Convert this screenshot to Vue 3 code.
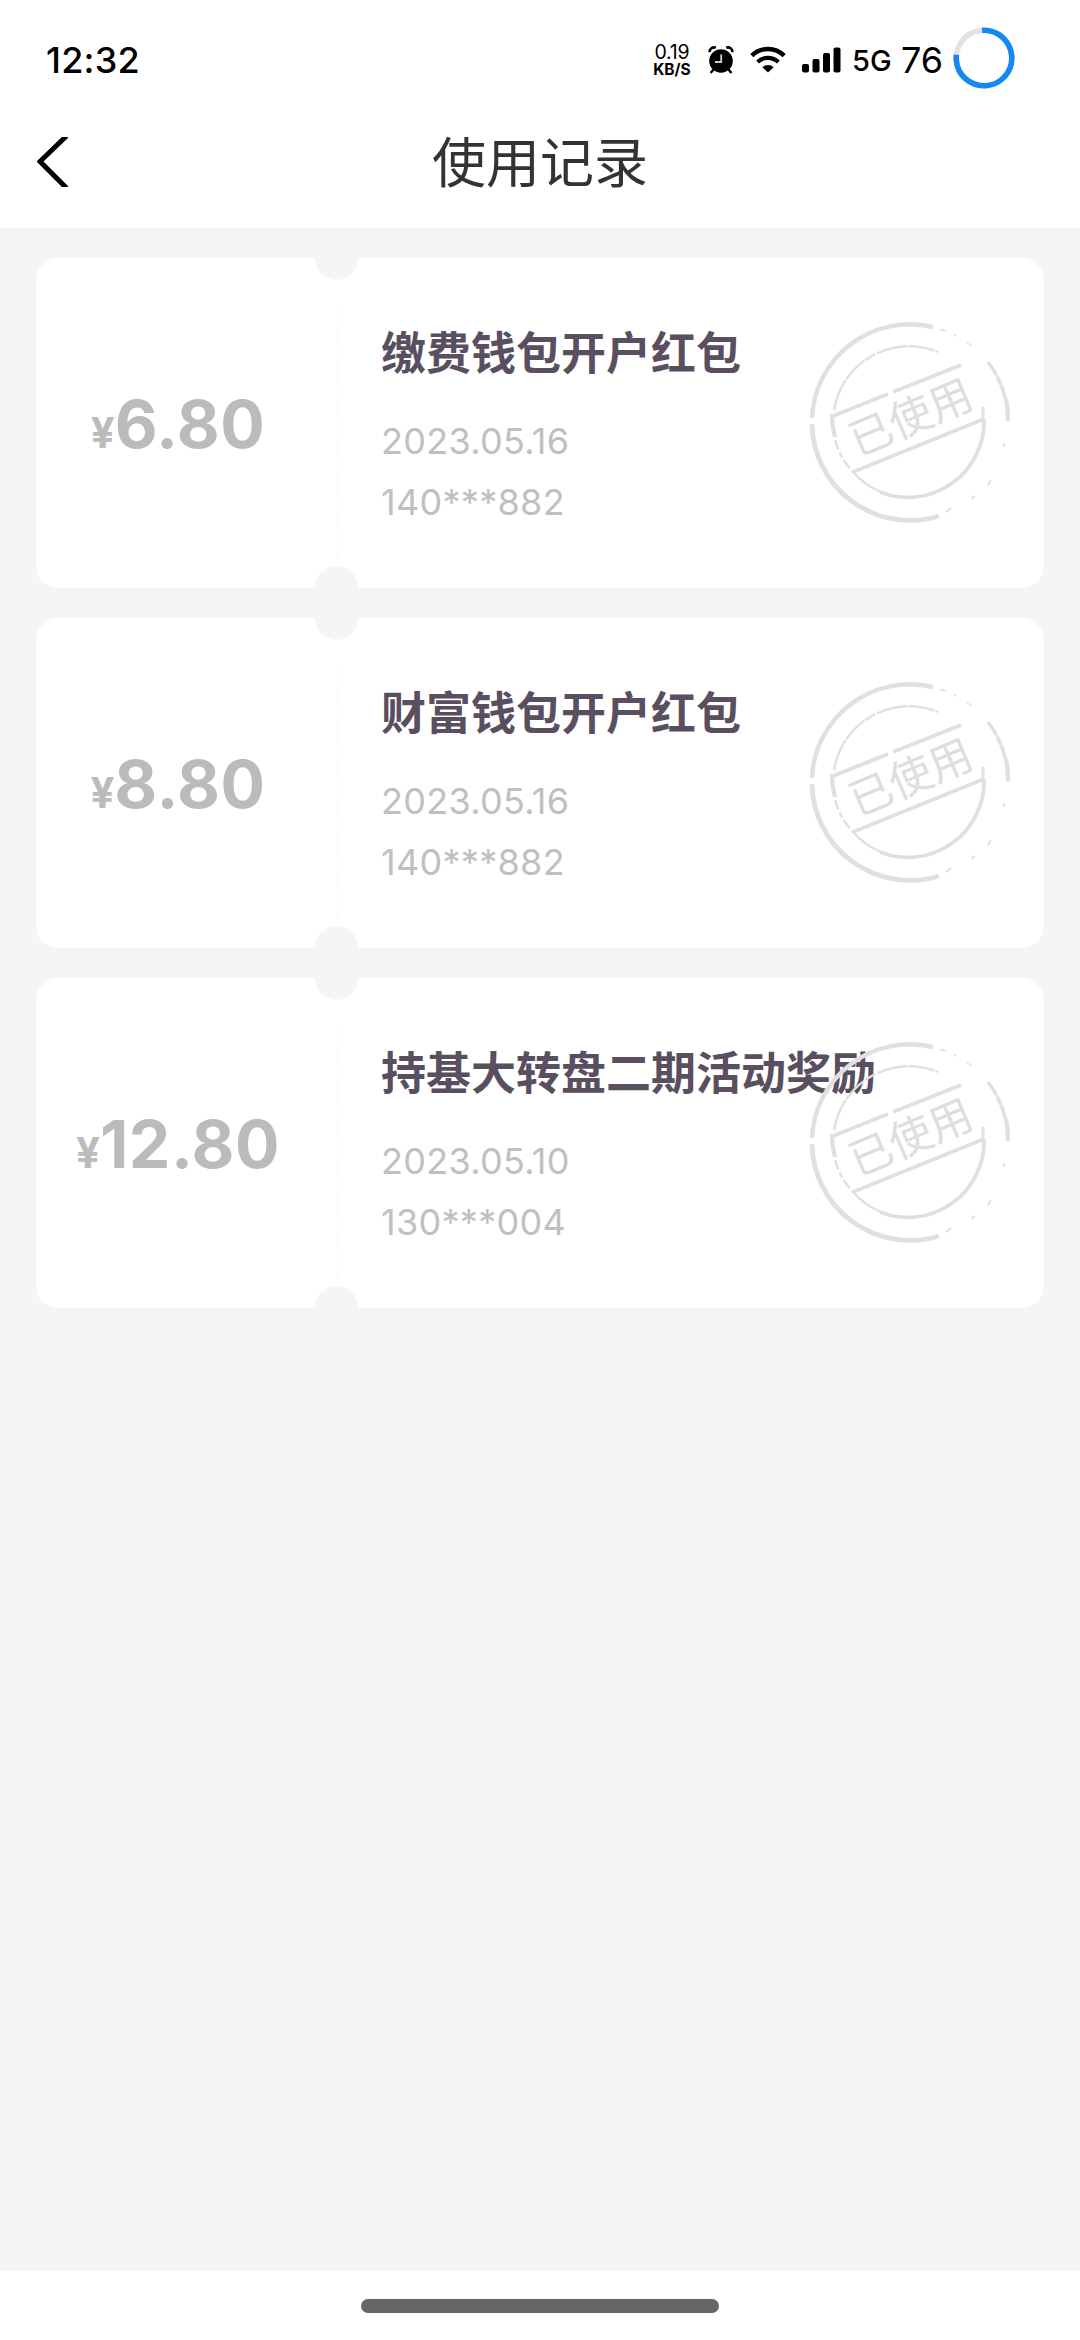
<template>
  <div class="page">
    <div class="status-bar">
      <span class="clock">12:32</span>
      <div class="status-right">
        <div class="net-speed">
          <span class="net-value">0.19</span>
          <span class="net-unit">KB/S</span>
        </div>
        <svg class="icon-alarm" width="26" height="28" viewBox="0 0 26 28">
          <circle cx="13" cy="15" r="11.8" fill="#000" />
          <path d="M1.6 6.2a4.4 4.4 0 0 1 6.2-4.4M24.4 6.2a4.4 4.4 0 0 0-6.2-4.4" fill="none" stroke="#000" stroke-width="2.6" />
          <path d="M5.5 23.5L2.6 27M20.5 23.5l2.9 3.5" stroke="#000" stroke-width="2.4" />
          <path d="M13.2 8.6v7.4H7" fill="none" stroke="#ccc" stroke-width="1.8" />
        </svg>
        <svg class="icon-wifi" width="36" height="28" viewBox="0 0 36 28">
          <path d="M1.8 9.6a23 23 0 0 1 32.4 0" fill="none" stroke="#000" stroke-width="4.4" />
          <path d="M7.6 16a15 15 0 0 1 20.8 0" fill="none" stroke="#000" stroke-width="4.2" />
          <path d="M12.4 21.2a8 8 0 0 1 11.2 0L18 26.6z" fill="#000" />
        </svg>
        <svg class="icon-signal" width="39" height="26" viewBox="0 0 39 26">
          <rect x="0" y="17" width="7" height="8.4" rx="2" />
          <rect x="10.5" y="12" width="7" height="13.4" rx="2" />
          <rect x="21" y="6" width="7" height="19.4" rx="2" />
          <rect x="31.5" y="0.4" width="7" height="25" rx="2" />
        </svg>
        <span class="net-type">5G</span>
        <span class="battery-text">76</span>
        <svg class="battery-ring" width="62" height="62" viewBox="0 0 62 62">
          <circle cx="31" cy="31" r="27.8" fill="none" stroke="#e2e2e2" stroke-width="5.4" />
          <circle
            cx="31" cy="31" r="27.8" fill="none" stroke="#1488f5" stroke-width="5.6"
            pathLength="100" stroke-dasharray="78 22" transform="rotate(-94 31 31)"
          />
        </svg>
      </div>
    </div>

    <div class="nav-bar">
      <svg class="back" width="32" height="50" viewBox="0 0 32 50">
        <path d="M29.5 -1L3 24.5l26.5 26.5" fill="none" stroke="#000" stroke-width="5" />
      </svg>
      <h1 class="nav-title">使用记录</h1>
    </div>

    <div class="record-list">
      <div v-for="(item, index) in records" :key="index" class="coupon">
        <div class="coupon-left">
          <span class="currency">¥</span><span class="amount">{{ item.amount }}</span>
        </div>
        <div class="coupon-info">
          <h2 class="coupon-title">{{ item.title }}</h2>
          <p class="coupon-meta">{{ item.date }}</p>
          <p class="coupon-meta">{{ item.account }}</p>
        </div>
        <i class="notch notch-top"></i>
        <i class="notch notch-bottom"></i>
        <i class="divider"></i>
        <svg class="stamp" width="210" height="210" viewBox="0 0 210 210">
          <g fill="none" stroke="#e0e0e0">
            <!-- outer ring, worn away on the right -->
            <path d="M7 101A98 98 0 0 1 128 10" stroke-width="4.4" />
            <path d="M7 107A98 98 0 0 0 134 199" stroke-width="4.8" />
            <path d="M183 45A98 98 0 0 1 203 102" stroke-width="3.4" stroke-dasharray="16 1 9 1" />
            <path d="M201 82A98 98 0 0 1 203 104" stroke-width="4.2" />
            <path d="M135 12A98 98 0 0 1 170 32" stroke-width="1.4" stroke-dasharray="6 9 3 12" />
            <path d="M199 126v4M186 163l-3 5M170 179l-4 3M146 191l-5 4" stroke-width="2" />
            <!-- inner ring -->
            <path d="M29 93A76 76 0 0 1 133 35" stroke-width="2.4" stroke-dasharray="32 1 26 1 12 2" />
            <path d="M27 97A76 76 0 0 0 30 120" stroke-width="4" />
            <path d="M30 123A76 76 0 0 0 48 155" stroke-width="2.4" stroke-dasharray="10 3 6 3" />
            <path d="M48 155A76 76 0 0 0 76 175" stroke-width="2.4" />
            <path d="M75 175A76 76 0 0 0 179 102" stroke-width="3.8" />
            <path d="M178 90v14" stroke-width="3" />
            <!-- label band -->
            <path d="M28 99L83 77M88 75L156 48" stroke-width="4" />
            <path d="M48 155L179 102" stroke-width="3.6" />
          </g>
          <text x="105.5" y="115.5" text-anchor="middle" transform="rotate(-23 106 100)">已使用</text>
        </svg>
      </div>
    </div>

    <div class="home-area">
      <div class="home-indicator"></div>
    </div>
  </div>
</template>

<script setup>
import { ref } from 'vue'

const records = ref([
  { amount: '6.80', title: '缴费钱包开户红包', date: '2023.05.16', account: '140***882' },
  { amount: '8.80', title: '财富钱包开户红包', date: '2023.05.16', account: '140***882' },
  { amount: '12.80', title: '持基大转盘二期活动奖励', date: '2023.05.10', account: '130***004' }
])
</script>

<style>
body { margin: 0; background: #f5f5f8; }
</style>

<style scoped>
.page {
  width: 1080px; height: 2340px; display: flex; flex-direction: column;
  background: #f5f5f8; font-family: Inter, "Noto Sans CJK SC", sans-serif; overflow: hidden;
}

.status-bar {
  height: 120px; box-sizing: border-box; padding: 0 65px 0 46px; background: #fff; color: #000;
  display: flex; justify-content: space-between; align-items: center;
}
.clock { font-size: 36px; font-weight: 500; line-height: 44px; letter-spacing: .2px; }

.status-right { display: flex; align-items: center; height: 62px; margin-bottom: 4px; }
.net-speed { display: flex; flex-direction: column; align-items: center; width: 40px; margin-right: 16px; margin-top: 6px; }
.net-value { font-size: 19.5px; line-height: 17px; letter-spacing: -.2px; }
.net-unit { font-size: 15.5px; line-height: 18px; font-weight: 700; }
.icon-alarm { margin-right: 16px; margin-top: 4px; }
.icon-wifi { margin-right: 16px; margin-top: 4px; }
.icon-signal { margin-right: 11px; margin-top: 4px; }
.net-type { font-size: 29px; font-weight: 500; width: 49px; margin-top: 4px; }
.battery-text { font-size: 36px; width: 52px; margin-top: 4px; }

.nav-bar {
  height: 108px; background: #fff; display: grid; grid-template-columns: 200px 1fr 200px;
  align-items: center;
}
.back { margin-left: 37px; margin-bottom: 24px; }
.nav-title {
  margin: 0 0 20px; text-align: center; font-size: 54px; line-height: 70px;
  font-weight: 400; color: #333;
}

.record-list { flex: 1; padding: 30px 36px 0; display: flex; flex-direction: column; gap: 30px; }

.coupon {
  position: relative; height: 330px; display: flex; background: #fff; border-radius: 22px;
}
.coupon-left {
  width: 282px; display: flex; align-items: baseline; justify-content: center;
  padding: 126px 0 0 2px; box-sizing: border-box; color: #bbb; font-weight: 700;
}
.currency { font-size: 42px; line-height: 80px; }
.amount { font-size: 66px; line-height: 80px; letter-spacing: .5px; }

.coupon-info { padding: 66px 0 0 63px; }
.coupon-title {
  margin: 0 0 27px; font-size: 45px; line-height: 60px; font-weight: 700;
  color: #5a4f60; white-space: nowrap;
}
.coupon-meta { margin: 0; font-size: 36px; line-height: 61px; color: #c0c0c0; letter-spacing: .3px; }

.notch {
  position: absolute; left: 279px; width: 43px; height: 22px; background: #f5f5f8;
}
.notch-top { top: 0; border-radius: 0 0 22px 22px; }
.notch-bottom { bottom: 0; border-radius: 22px 22px 0 0; }

.divider {
  position: absolute; left: 301px; top: 50px; height: 250px; width: 0;
  border-left: 2px dashed #f9f9f9;
}

.stamp { position: absolute; left: 769px; top: 59px; }
.stamp text { font-size: 43px; fill: #dedede; font-family: "Noto Sans CJK SC", sans-serif; }

.home-area {
  height: 69px; background: #fff; display: flex; justify-content: center; align-items: center;
}
.home-indicator { width: 358px; height: 14px; border-radius: 7px; background: #666; }
</style>
